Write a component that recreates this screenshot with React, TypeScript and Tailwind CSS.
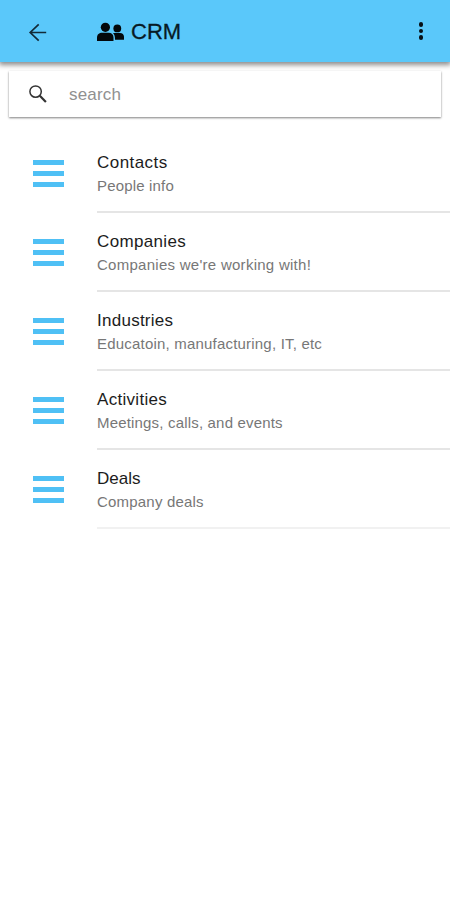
const items = [
  { title: 'Contacts', info: 'People info', titleSpacing: 'tracking-[0.45px]', infoSpacing: 'tracking-[0.17px]' },
  { title: 'Companies', info: "Companies we're working with!", titleSpacing: 'tracking-[0.35px]', infoSpacing: 'tracking-[0.27px]' },
  { title: 'Industries', info: 'Educatoin, manufacturing, IT, etc', titleSpacing: 'tracking-[0.26px]', infoSpacing: 'tracking-[0.2px]' },
  { title: 'Activities', info: 'Meetings, calls, and events', titleSpacing: 'tracking-[0.3px]', infoSpacing: 'tracking-[0.18px]' },
  { title: 'Deals', info: 'Company deals', titleSpacing: 'tracking-[0px]', infoSpacing: 'tracking-[0.2px]' },
];

function BackIcon() {
  return (
    <svg className="w-5 h-5" viewBox="0 0 20 20" fill="none" stroke="#122b38" strokeWidth="1.7">
      <path d="M10.7 1.4 2.2 9.5l8.5 8.1M2.4 9.5H18.2" />
    </svg>
  );
}

function PeopleIcon() {
  return (
    <svg className="w-7 h-5 -mt-[2px]" viewBox="0 0 28 20" fill="#03080b">
      <circle cx="8.4" cy="5.3" r="4.6" />
      <path d="M0 19v-3.4c0-3.5 2.4-4.9 5-4.9h6.6c2.9 0 4.9 1.7 4.9 4.9V19z" />
      <circle cx="20.3" cy="6.4" r="3.9" />
      <path d="M16 11.3c1.4 1.2 2 2.9 2 6.4h9v-2.9c0-2.5-1.7-3.9-4-3.9h-5c-.8 0-1.4.1-2 .4z" />
    </svg>
  );
}

function SearchIcon() {
  return (
    <svg className="w-5 h-5" viewBox="0 0 20 20" fill="none" stroke="#333333">
      <circle cx="7.6" cy="7.6" r="5.7" strokeWidth="1.5" />
      <path d="m11.8 11.8 6.1 6.3" strokeWidth="2.2" />
    </svg>
  );
}

function MenuIcon() {
  return (
    <div className="w-[31px] flex flex-col gap-[6px]">
      <div className="h-[5px] bg-[#4fc0f5]" />
      <div className="h-[5px] bg-[#4fc0f5]" />
      <div className="h-[5px] bg-[#4fc0f5]" />
    </div>
  );
}

export default function App() {
  return (
    <div className="w-full h-[900px] bg-white overflow-hidden font-['Liberation_Sans',Arial,sans-serif]">
      <header className="h-[62px] flex items-center bg-[#5ac8fa] pl-7 pr-[27px] pt-[3px] shadow-[0_2px_5px_1px_rgba(0,0,0,0.45)]">
        <BackIcon />
        <div className="ml-[49px] flex items-center">
          <PeopleIcon />
          <h1 className="ml-[6px] -mt-[2px] text-[22px] leading-7 text-[#071a24] [-webkit-text-stroke:0.3px_#071a24]">CRM</h1>
        </div>
        <div className="ml-auto mb-[3px] flex flex-col gap-[2.3px]">
          <div className="w-[4.4px] h-[4.4px] rounded-full bg-[#071015]" />
          <div className="w-[4.4px] h-[4.4px] rounded-full bg-[#071015]" />
          <div className="w-[4.4px] h-[4.4px] rounded-full bg-[#071015]" />
        </div>
      </header>

      <div className="mt-[9px] mx-[9px] h-[46px] flex items-center pl-[19px] bg-white shadow-[0_1px_2px_rgba(0,0,0,0.5)]">
        <SearchIcon />
        <span className="ml-[21px] mt-[2px] text-[17px] leading-6 tracking-[0.2px] text-[#909090]">search</span>
      </div>

      <div className="mt-[17px]">
        {items.map((item) => (
          <div key={item.title} className="group h-[79px] flex pl-[33px]">
            <div className="pt-[26px]">
              <MenuIcon />
            </div>
            <div className="ml-[33px] flex-1 pt-[17px] border-b-2 border-[#e5e5e5] group-last:border-[#f1f1f1] whitespace-nowrap">
              <h2 className={`text-[17px] leading-6 text-[#1c1c1c] ${item.titleSpacing}`}>{item.title}</h2>
              <p className={`-mt-px text-[15px] leading-6 text-[#777777] ${item.infoSpacing}`}>{item.info}</p>
            </div>
          </div>
        ))}
      </div>
    </div>
  );
}
